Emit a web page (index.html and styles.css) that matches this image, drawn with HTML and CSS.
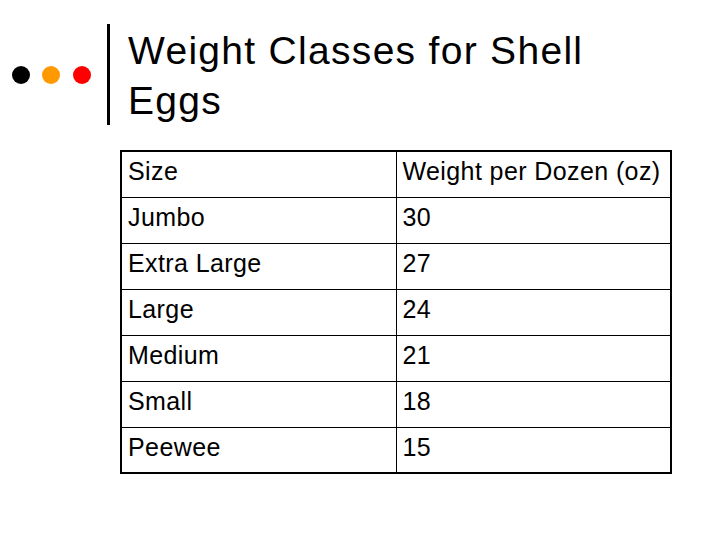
FILE: index.html
```html
<!DOCTYPE html>
<html>
<head>
<meta charset="utf-8">
<link rel="stylesheet" href="styles.css">
</head>
<body>
<div class="slide">
  <header class="head">
    <div class="dots">
      <span class="dot black"></span>
      <span class="dot orange"></span>
      <span class="dot red"></span>
    </div>
    <div class="bar"></div>
    <h1 class="title">Weight Classes for Shell<br>Eggs</h1>
  </header>
  <table class="grid">
    <tr><td>Size</td><td>Weight per Dozen (oz)</td></tr>
    <tr><td>Jumbo</td><td>30</td></tr>
    <tr><td>Extra Large</td><td>27</td></tr>
    <tr><td>Large</td><td>24</td></tr>
    <tr><td>Medium</td><td>21</td></tr>
    <tr><td>Small</td><td>18</td></tr>
    <tr><td>Peewee</td><td>15</td></tr>
  </table>
</div>
</body>
</html>
```
FILE: styles.css
```css
html, body {
  margin: 0;
  padding: 0;
  background: #fff;
}
.slide {
  width: 720px;
  height: 540px;
  font-family: "Liberation Sans", Arial, sans-serif;
  color: #000;
  overflow: hidden;
}
.head {
  display: flex;
  align-items: flex-start;
  padding-top: 24px;
  height: 126px;
  box-sizing: border-box;
}
.dots {
  display: flex;
  gap: 12px;
  margin-left: 12px;
  margin-top: 42px;
}
.dot {
  width: 18px;
  height: 18px;
  border-radius: 50%;
  display: block;
}
.black { background: #000; }
.orange { background: #ff9900; }
.red { background: #ff0000; }
.dots .dot:nth-child(3) { margin-left: 1px; }
.bar {
  width: 3px;
  height: 101px;
  background: #000;
  margin-left: 16px;
}
.title {
  margin: 2px 0 0 18px;
  font-weight: normal;
  font-size: 39px;
  line-height: 50px;
  letter-spacing: 1.3px;
}
.grid {
  margin: 24px 0 0 120px;
  width: 552px;
  border-collapse: collapse;
  border: 2px solid #000;
  box-sizing: border-box;
}
.grid td {
  width: 50%;
  height: 46px;
  box-sizing: border-box;
  border: 1px solid #000;
  padding: 0 0 6px 6px;
  font-size: 25px;
  line-height: 28px;
  letter-spacing: 0.4px;
  vertical-align: middle;
}
```
